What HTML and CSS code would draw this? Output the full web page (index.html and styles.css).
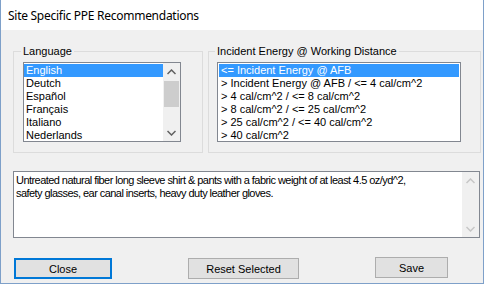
FILE: index.html
```html
<!DOCTYPE html>
<html>
<head>
<meta charset="utf-8">
<link rel="stylesheet" href="styles.css">
</head>
<body>
<div class="window">
  <div class="titlebar">Site Specific PPE Recommendations</div>
  <div class="client">
    <div class="groups">
      <div class="group group-lang">
        <span class="group-label">Language</span>
        <div class="listbox lang-list">
          <ul class="items">
            <li class="sel">English</li>
            <li>Deutch</li>
            <li>Español</li>
            <li>Français</li>
            <li>Italiano</li>
            <li>Nederlands</li>
          </ul>
          <div class="vscroll">
            <div class="arrow"><svg width="9" height="6" viewBox="0 0 9 6"><polyline points="0.5,5 4.5,1 8.5,5" fill="none" stroke="#606060" stroke-width="1.5"/></svg></div>
            <div class="track"><div class="thumb"></div></div>
            <div class="arrow"><svg width="9" height="6" viewBox="0 0 9 6"><polyline points="0.5,1 4.5,5 8.5,1" fill="none" stroke="#606060" stroke-width="1.5"/></svg></div>
          </div>
        </div>
      </div>
      <div class="group group-energy">
        <span class="group-label">Incident Energy @ Working Distance</span>
        <div class="listbox energy-list">
          <ul class="items">
            <li class="sel">&lt;= Incident Energy @ AFB</li>
            <li>&gt; Incident Energy @ AFB / &lt;= 4 cal/cm^2</li>
            <li>&gt; 4 cal/cm^2 / &lt;= 8 cal/cm^2</li>
            <li>&gt; 8 cal/cm^2 / &lt;= 25 cal/cm^2</li>
            <li>&gt; 25 cal/cm^2 / &lt;= 40 cal/cm^2</li>
            <li>&gt; 40 cal/cm^2</li>
          </ul>
        </div>
      </div>
    </div>
    <div class="textbox">
      <div class="text">Untreated natural fiber long sleeve shirt &amp; pants with a fabric weight of at least 4.5 oz/yd^2,<br>safety glasses, ear canal inserts, heavy duty leather gloves.</div>
      <div class="vscroll disabled">
        <div class="arrow"><svg width="9" height="6" viewBox="0 0 9 6"><polyline points="0.5,5 4.5,1 8.5,5" fill="none" stroke="#c6c6c6" stroke-width="1.5"/></svg></div>
        <div class="track"></div>
        <div class="arrow"><svg width="9" height="6" viewBox="0 0 9 6"><polyline points="0.5,1 4.5,5 8.5,1" fill="none" stroke="#c6c6c6" stroke-width="1.5"/></svg></div>
      </div>
    </div>
    <div class="buttons">
      <button class="btn btn-close">Close</button>
      <button class="btn btn-reset">Reset Selected</button>
      <button class="btn btn-save">Save</button>
    </div>
  </div>
</div>
</body>
</html>
```

FILE: styles.css
```css
* { box-sizing: border-box; }
html, body { margin: 0; padding: 0; background: #f0f0f0; }
body { font-family: "Liberation Sans", Arial, sans-serif; font-size: 11px; color: #000; }

.window {
  width: 484px;
  height: 284px;
  border: 1px solid #7ea0c9;
  border-top: none;
  background: #f0f0f0;
  display: flex;
  flex-direction: column;
  overflow: hidden;
}

.titlebar {
  height: 30px;
  background: #fff;
  padding-left: 7px;
  display: flex;
  align-items: center;
  font-family: "Noto Sans", "Open Sans", sans-serif;
  font-size: 12px;
  letter-spacing: -0.27px;
  color: #000;
}

.client {
  flex: 1;
  padding: 0 0 0 12px;
  display: flex;
  flex-direction: column;
}

.groups {
  display: flex;
  gap: 5px;
  margin-top: 21px;
}

.group {
  border: 1px solid #dcdcdc;
  padding: 0 0 10px 9px;
  height: 102px;
}
.group-lang { width: 190px; }
.group-energy { width: 273px; padding-left: 8px; }

.group-label {
  display: block;
  width: fit-content;
  margin: -7px 0 4px -2px;
  padding: 0 2px;
  line-height: 13px;
  background: #f0f0f0;
  white-space: nowrap;
}

.listbox {
  border: 1px solid #828790;
  background: #fff;
  height: 80px;
  display: flex;
}
.lang-list { width: 158px; }
.energy-list { width: 244px; padding: 0 1px; }

.items {
  list-style: none;
  margin: 0;
  padding: 1px 0 0 0;
  flex: 1;
}
.items li {
  height: 13px;
  line-height: 13px;
  padding-left: 2px;
  white-space: nowrap;
}
.items li.sel {
  background: #3399ff;
  color: #fff;
}

.vscroll {
  width: 17px;
  background: #f0f0f0;
  display: flex;
  flex-direction: column;
}
.vscroll .arrow {
  height: 17px;
  display: flex;
  align-items: center;
  justify-content: center;
}
.vscroll .track {
  flex: 1;
  padding: 1px 1px 0 1px;
}
.vscroll .thumb {
  height: 26px;
  background: #cdcdcd;
}

.textbox {
  margin-top: 18px;
  width: 467px;
  height: 67px;
  border: 1px solid #828790;
  background: #fff;
  display: flex;
}
.textbox .text {
  flex: 1;
  padding: 2px 2px 0 2px;
  line-height: 13px;
  letter-spacing: -0.55px;
  white-space: nowrap;
}

.buttons {
  display: flex;
  margin-top: 20px;
  align-items: flex-start;
}
.btn {
  height: 21px;
  background: #e1e1e1;
  border: 1px solid #adadad;
  font-family: "Liberation Sans", Arial, sans-serif;
  font-size: 11px;
  color: #000;
  padding: 0;
}
.btn-close {
  width: 98px;
  margin-left: 1px;
  border: 2px solid #0078d7;
}
.btn-reset { width: 111px; margin-left: 76px; }
.btn-save { width: 73px; margin-left: 76px; margin-top: -1px; }
```
